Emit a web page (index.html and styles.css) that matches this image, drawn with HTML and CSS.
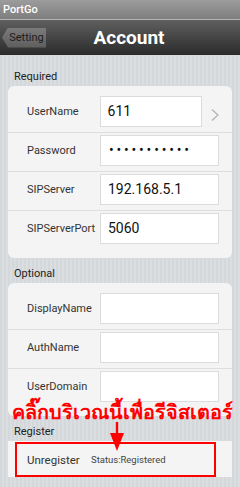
FILE: index.html
```html
<!DOCTYPE html>
<html lang="en">

<head>
    <meta charset="UTF-8">
    <meta name="viewport" content="width=device-width, initial-scale=1.0">
    <title>PortGo Account</title>
    <link rel="stylesheet" href="styles.css">
</head>

<body>
    <div class="statusbar">PortGo</div>
    <div class="navbar">
        <button class="back">Setting</button>
        <h1 class="title">Account</h1>
    </div>

    <div class="content">
        <div class="group-label first">Required</div>
        <div class="card">
            <div class="row">
                <span class="label">UserName</span>
                <div class="field short">611</div>
                <svg class="chevron" width="8" height="12" viewBox="0 0 8 12">
                    <polyline points="1,0.5 7,6 1,11.5" fill="none" stroke="#b0b0b0" stroke-width="1.2" />
                </svg>
            </div>
            <div class="row">
                <span class="label">Password</span>
                <div class="field dots">•••••••••••</div>
            </div>
            <div class="row">
                <span class="label">SIPServer</span>
                <div class="field">192.168.5.1</div>
            </div>
            <div class="row">
                <span class="label">SIPServerPort</span>
                <div class="field">5060</div>
            </div>
        </div>

        <div class="group-label">Optional</div>
        <div class="card">
            <div class="row">
                <span class="label">DisplayName</span>
                <div class="field"></div>
            </div>
            <div class="row">
                <span class="label">AuthName</span>
                <div class="field"></div>
            </div>
            <div class="row">
                <span class="label">UserDomain</span>
                <div class="field"></div>
            </div>
        </div>

        <div class="group-label">Register</div>
        <div class="card plain">
            <div class="mark">
                <span class="unreg">Unregister</span>
                <span class="status">Status:Registered</span>
            </div>
        </div>
    </div>

    <div class="hint">คลิ๊กบริเวณนี้เพื่อรีจิสเตอร์</div>
    <svg class="arrow" width="16" height="30" viewBox="0 0 16 30">
        <rect x="6.8" y="0" width="2.4" height="13" fill="#f00" />
        <polygon points="1,11 15,11 8,29" fill="#f00" />
    </svg>
</body>

</html>
```

FILE: styles.css
```css
* {
    margin: 0;
    padding: 0;
    box-sizing: border-box;
}

body {
    width: 240px;
    height: 487px;
    overflow: hidden;
    position: relative;
    font-family: Roboto, 'Noto Sans', sans-serif;
    background: repeating-linear-gradient(90deg, #d4d8db 0, #d4d8db 2px, #dadee1 2px, #dadee1 4px);
    color: #333;
}

.statusbar {
    height: 20px;
    padding-left: 3px;
    line-height: 20px;
    font-size: 11px;
    font-weight: 500;
    color: #fff;
    background: linear-gradient(#9c9c9c, #7e7e7e);
    border-bottom: 1px solid #b4b4b4;
}

.navbar {
    height: 35px;
    display: flex;
    align-items: center;
    position: relative;
    background: linear-gradient(#5f5f5f, #2b2b2b);
}

.back {
    margin-left: 2px;
    height: 20px;
    width: 44px;
    padding-left: 5px;
    border: none;
    font-family: Roboto, sans-serif;
    font-size: 11px;
    color: #1c1c1c;
    background: linear-gradient(#7a7a7a, #5e5e5e);
    clip-path: polygon(6px 0, 100% 0, 100% 100%, 6px 100%, 0 50%);
}

.title {
    position: absolute;
    left: 18px;
    right: 0;
    text-align: center;
    font-size: 19px;
    font-weight: bold;
    color: #fff;
    pointer-events: none;
}

.content {
    padding: 0 8px;
}

.group-label {
    height: 25px;
    padding: 0 0 2px 6px;
    display: flex;
    align-items: flex-end;
    font-size: 11px;
    line-height: 14px;
    color: #222;
}

.group-label.first {
    height: 31px;
}

.card {
    background: #f4f4f4;
    border-radius: 6px;
    padding: 8px 0 9px;
}

.card.plain {
    border-radius: 0;
    padding: 1px 16px 0 7px;
    height: 36px;
}

.row {
    height: 39px;
    display: flex;
    align-items: flex-start;
    padding: 2px 13px 0 19px;
    border-bottom: 1px solid #dedede;
}

.row:last-child {
    border-bottom: none;
    height: 38px;
}

.label {
    width: 73px;
    height: 31px;
    line-height: 31px;
    font-size: 11px;
    color: #333;
    white-space: nowrap;
}

.field {
    width: 119px;
    height: 31px;
    line-height: 29px;
    padding-left: 7px;
    background: #fff;
    border: 1px solid #dcdcdc;
    font-size: 14px;
    color: #111;
}

.field.short {
    width: 103px;
}

.field.dots {
    font-size: 14px;
    letter-spacing: 2.8px;
    padding-left: 8px;
}

.chevron {
    margin: 13px 0 0 9px;
}

.mark {
    height: 35px;
    border: 2px solid #f00;
    display: flex;
    align-items: center;
    padding-left: 10px;
}

.unreg {
    font-size: 11.5px;
    color: #333;
    width: 64px;
}

.status {
    font-size: 9.5px;
    color: #444;
}

.hint {
    position: absolute;
    left: 12px;
    top: 396px;
    font-family: 'DejaVu Sans', sans-serif;
    font-size: 19.8px;
    font-weight: bold;
    color: #f00;
    white-space: nowrap;
}

.arrow {
    position: absolute;
    left: 109px;
    top: 422px;
}
```
